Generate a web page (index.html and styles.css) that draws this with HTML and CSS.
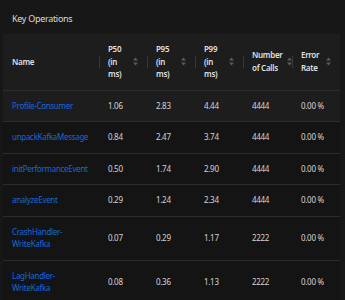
FILE: index.html
```html
<!DOCTYPE html>
<html lang="en">
<head>
  <meta charset="UTF-8">
  <meta name="viewport" content="width=device-width, initial-scale=1.0">
  <title>Key Operations</title>
  <link rel="stylesheet" href="styles.css">
</head>
<body>
  <div class="card">
    <div class="card-title">Key Operations</div>

    <table class="ops">
      <colgroup>
        <col class="col-name">
        <col class="col-num">
        <col class="col-num">
        <col class="col-num">
        <col class="col-calls">
        <col class="col-num">
      </colgroup>
      <thead>
        <tr>
          <th><div class="th-inner"><span class="th-title">Name</span></div></th>
          <th class="sortable"><div class="th-inner"><span class="th-title">P50 (in ms)</span><span class="sorter"></span></div></th>
          <th class="sortable"><div class="th-inner"><span class="th-title">P95 (in ms)</span><span class="sorter"></span></div></th>
          <th class="sortable"><div class="th-inner"><span class="th-title">P99 (in ms)</span><span class="sorter"></span></div></th>
          <th class="sortable"><div class="th-inner"><span class="th-title">Number of Calls</span><span class="sorter"></span></div></th>
          <th class="sortable last"><div class="th-inner"><span class="th-title">Error Rate</span><span class="sorter"></span></div></th>
        </tr>
      </thead>
      <tbody id="rows"></tbody>
    </table>
  </div>

  <script>
    // operations shown in the table
    const operations = [
      { name: 'Profile-Consumer', p50: '1.06', p95: '2.83', p99: '4.44', calls: 4444, error: '0.00 %' },
      { name: 'unpackKafkaMessage', p50: '0.84', p95: '2.47', p99: '3.74', calls: 4444, error: '0.00 %' },
      { name: 'initPerformanceEvent', p50: '0.50', p95: '1.74', p99: '2.90', calls: 4444, error: '0.00 %' },
      { name: 'analyzeEvent', p50: '0.29', p95: '1.24', p99: '2.34', calls: 4444, error: '0.00 %' },
      { name: 'CrashHandler-WriteKafka', p50: '0.07', p95: '0.29', p99: '1.17', calls: 2222, error: '0.00 %' },
      { name: 'LagHandler-WriteKafka', p50: '0.08', p95: '0.36', p99: '1.13', calls: 2222, error: '0.00 %' }
    ];

    const sorterSvg = `
      <svg width="5" height="9" viewBox="0 0 5 9">
        <path d="M2.5 0.5 L5 3.5 L0 3.5 Z" fill="currentColor"/>
        <path d="M0 5.5 L5 5.5 L2.5 8.5 Z" fill="currentColor"/>
      </svg>`;

    document.querySelectorAll('.sorter').forEach(el => el.innerHTML = sorterSvg);

    document.getElementById('rows').innerHTML = operations.map((op, i) => `
      <tr class="${i === 0 ? 'hover' : ''}">
        <td><a href="#" class="op-link">${op.name}</a></td>
        <td>${op.p50}</td>
        <td>${op.p95}</td>
        <td>${op.p99}</td>
        <td>${op.calls}</td>
        <td>${op.error}</td>
      </tr>
    `).join('');
  </script>
</body>
</html>
```

FILE: styles.css
```css
body {
  font-family: "Noto Sans", "Open Sans", sans-serif;
  font-size: 8px;
  letter-spacing: -0.3px;
  background-color: #171717;
  color: rgba(255, 255, 255, 0.85);
  margin: 0;
}
.card {
  padding: 0 5px 0 3px;
}
.card-title {
  height: 34px;
  line-height: 38px;
  padding-left: 9px;
  font-size: 9px;
}
.ops {
  width: 337px;
  table-layout: fixed;
  border-collapse: collapse;
  background-color: #141414;
}
.col-name {
  width: 96px;
}
.col-num {
  width: 48px;
}
.col-calls {
  width: 49px;
}
th, td {
  padding: 9px;
  line-height: 12.5px;
  text-align: left;
  border-bottom: 1px solid #2c2c2c;
}
th {
  background-color: #1d1d1d;
  font-weight: 600;
  color: rgba(255, 255, 255, 0.88);
  position: relative;
}
th::before {
  content: "";
  position: absolute;
  left: 0;
  top: 50%;
  width: 1px;
  height: 12px;
  margin-top: -6px;
  background-color: rgba(255, 255, 255, 0.12);
}
th:first-child::before {
  display: none;
}
.th-inner {
  display: flex;
  align-items: center;
  justify-content: space-between;
}
.th-title {
  flex: 1;
}
.sorter {
  display: flex;
  margin-left: 4px;
  color: rgba(255, 255, 255, 0.28);
}
.sorter svg {
  display: block;
}
td {
  color: rgba(255, 255, 255, 0.82);
}
tr.hover td {
  background-color: #1d1d1d;
}
.op-link {
  color: #1668dc;
  text-decoration: none;
}
```
